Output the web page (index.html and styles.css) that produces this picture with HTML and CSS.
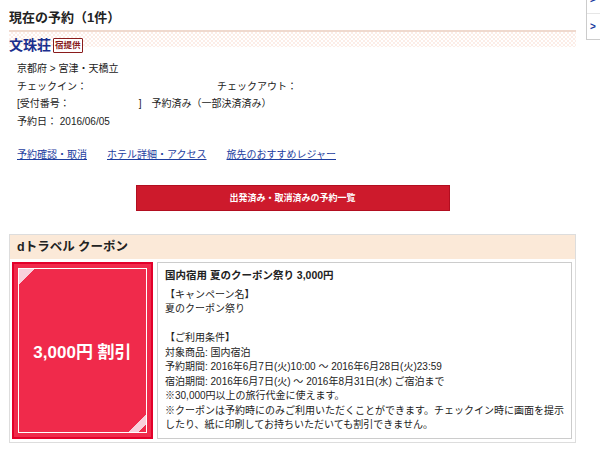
FILE: index.html
```html
<!DOCTYPE html>
<html lang="ja">
<head>
    <meta charset="UTF-8">
    <meta name="viewport" content="width=device-width, initial-scale=1.0">
    <title>現在の予約</title>
    <link rel="stylesheet" href="styles.css">
</head>
<body>
    <!-- 右上のサイドメニュー -->
    <div class="side-nav">
        <a href="#">&gt;</a>
        <a href="#">&gt;</a>
    </div>

    <div class="page">
        <h2 class="section-title">現在の予約（1件）</h2>

        <div class="hotel">
            <div class="hotel-name">
                <a href="#">文珠荘</a><span class="badge">宿提供</span>
            </div>
            <div class="details">
                <p>京都府 &gt; 宮津・天橋立</p>
                <p><span class="col">チェックイン：</span><span>チェックアウト：</span></p>
                <p>[受付番号：<span class="blank"></span>]<span class="status">予約済み（一部決済済み）</span></p>
                <p>予約日： 2016/06/05</p>
            </div>
            <div class="links">
                <a href="#">予約確認・取消</a>
                <a href="#">ホテル詳細・アクセス</a>
                <a href="#">旅先のおすすめレジャー</a>
            </div>
        </div>

        <div class="btn-row">
            <a href="#" class="btn">出発済み・取消済みの予約一覧</a>
        </div>

        <div class="coupon">
            <div class="coupon-head">dトラベル クーポン</div>
            <div class="coupon-body">
                <div class="coupon-badge">
                    <div class="coupon-face">3,000円 割引</div>
                </div>
                <div class="coupon-info">
                    <p class="coupon-title">国内宿用 夏のクーポン祭り 3,000円</p>
                    <p class="coupon-text">
                        【キャンペーン名】<br>
                        夏のクーポン祭り<br>
                        <br>
                        【ご利用条件】<br>
                        対象商品: 国内宿泊<br>
                        予約期間: 2016年6月7日(火)10:00 〜 2016年6月28日(火)23:59<br>
                        宿泊期間: 2016年6月7日(火) 〜 2016年8月31日(水) ご宿泊まで<br>
                        ※30,000円以上の旅行代金に使えます。<br>
                        ※クーポンは予約時にのみご利用いただくことができます。チェックイン時に画面を提示したり、紙に印刷してお持ちいただいても割引できません。
                    </p>
                </div>
            </div>
        </div>
    </div>
</body>
</html>
```

FILE: styles.css
```css
* {
    box-sizing: border-box;
}
body {
    margin: 0;
    font-family: "Liberation Sans", "Noto Sans CJK JP", sans-serif;
    color: #222;
    background: #fff;
    overflow: hidden;
}
p {
    margin: 0;
}
a {
    color: #1d3d9e;
}
.page {
    width: 567px;
    margin-left: 9px;
}
.section-title {
    margin: 0;
    height: 32px;
    padding-top: 8px;
    font-size: 13px;
    line-height: 20px;
    border-bottom: 2px solid #efd9ce;
}
.hotel {
    background: linear-gradient(rgba(255, 255, 255, 0) 15px, #fff 15px),
        repeating-conic-gradient(#fcede7 0 25%, #fff 0 50%) 0 0 / 4px 4px;
}
.hotel-name {
    display: flex;
    align-items: center;
    gap: 2px;
    padding-top: 3px;
    line-height: 20px;
}
.hotel-name a {
    font-size: 14px;
    font-weight: bold;
    color: #1a2f8e;
    text-decoration: none;
}
.badge {
    font-size: 8.5px;
    font-weight: bold;
    line-height: 11px;
    color: #8a1c1c;
    background: #fff;
    border: 1px solid #8a1c1c;
    border-radius: 1px;
    padding: 1px 1px;
}
.details {
    margin-top: 5px;
    padding-left: 8px;
    font-size: 10px;
    line-height: 17.7px;
}
.col {
    display: inline-block;
    width: 200px;
}
.blank {
    display: inline-block;
    width: 69px;
}
.status {
    margin-left: 10px;
}
.links {
    display: flex;
    gap: 20px;
    margin-top: 15px;
    padding-left: 8px;
    font-size: 10px;
    line-height: 18px;
}
.btn-row {
    display: flex;
    justify-content: center;
    margin-top: 21px;
}
.btn {
    display: flex;
    align-items: center;
    justify-content: center;
    width: 314px;
    height: 26px;
    background: #cd1a2c;
    border: 1px solid #b20e20;
    color: #fff;
    font-size: 9px;
    font-weight: bold;
    text-decoration: none;
}
.coupon {
    margin-top: 23px;
    border: 1px solid #ddd;
}
.coupon-head {
    height: 24px;
    padding-left: 7px;
    background: #fbe9d8;
    font-size: 12.5px;
    font-weight: bold;
    line-height: 24px;
}
.coupon-body {
    display: flex;
    gap: 4px;
    padding: 3px 3px 3px 2px;
}
.coupon-badge {
    flex: 0 0 141px;
    padding: 4px;
    background: #f02a4b;
    border: 2px solid #e3002a;
}
.coupon-face {
    position: relative;
    height: 100%;
    display: flex;
    align-items: center;
    justify-content: center;
    border: 1px solid #fff;
    color: #fff;
    font-size: 17px;
    font-weight: bold;
}
/* 角の飾り */
.coupon-face::before {
    content: "";
    position: absolute;
    top: 0;
    left: 0;
    width: 16px;
    height: 16px;
    background: linear-gradient(135deg, #f8d0dc 0 50%, transparent 50%);
}
.coupon-face::after {
    content: "";
    position: absolute;
    right: 0;
    bottom: 0;
    width: 18px;
    height: 18px;
    background: linear-gradient(135deg, transparent 0 50%, #f8d0dc 50% 78%, #f02a4b 78%);
}
.coupon-info {
    flex: 1;
    padding: 4px 2px 5px 7px;
    border: 1px solid #ccc;
}
.coupon-title {
    font-size: 10.5px;
    font-weight: bold;
    line-height: 16px;
}
.coupon-text {
    margin-top: 5px;
    font-size: 10px;
    line-height: 14.5px;
}
.side-nav {
    position: absolute;
    top: -13px;
    right: 0;
    width: 14px;
    background: #fff;
    border-left: 1px solid #ccc;
    border-bottom: 1px solid #ccc;
}
.side-nav a {
    display: block;
    height: 26px;
    padding-left: 3px;
    font-size: 10px;
    font-weight: bold;
    line-height: 26px;
    color: #1a3ca0;
    text-decoration: none;
}
.side-nav a + a {
    border-top: 1px solid #e6e6e6;
}
```
